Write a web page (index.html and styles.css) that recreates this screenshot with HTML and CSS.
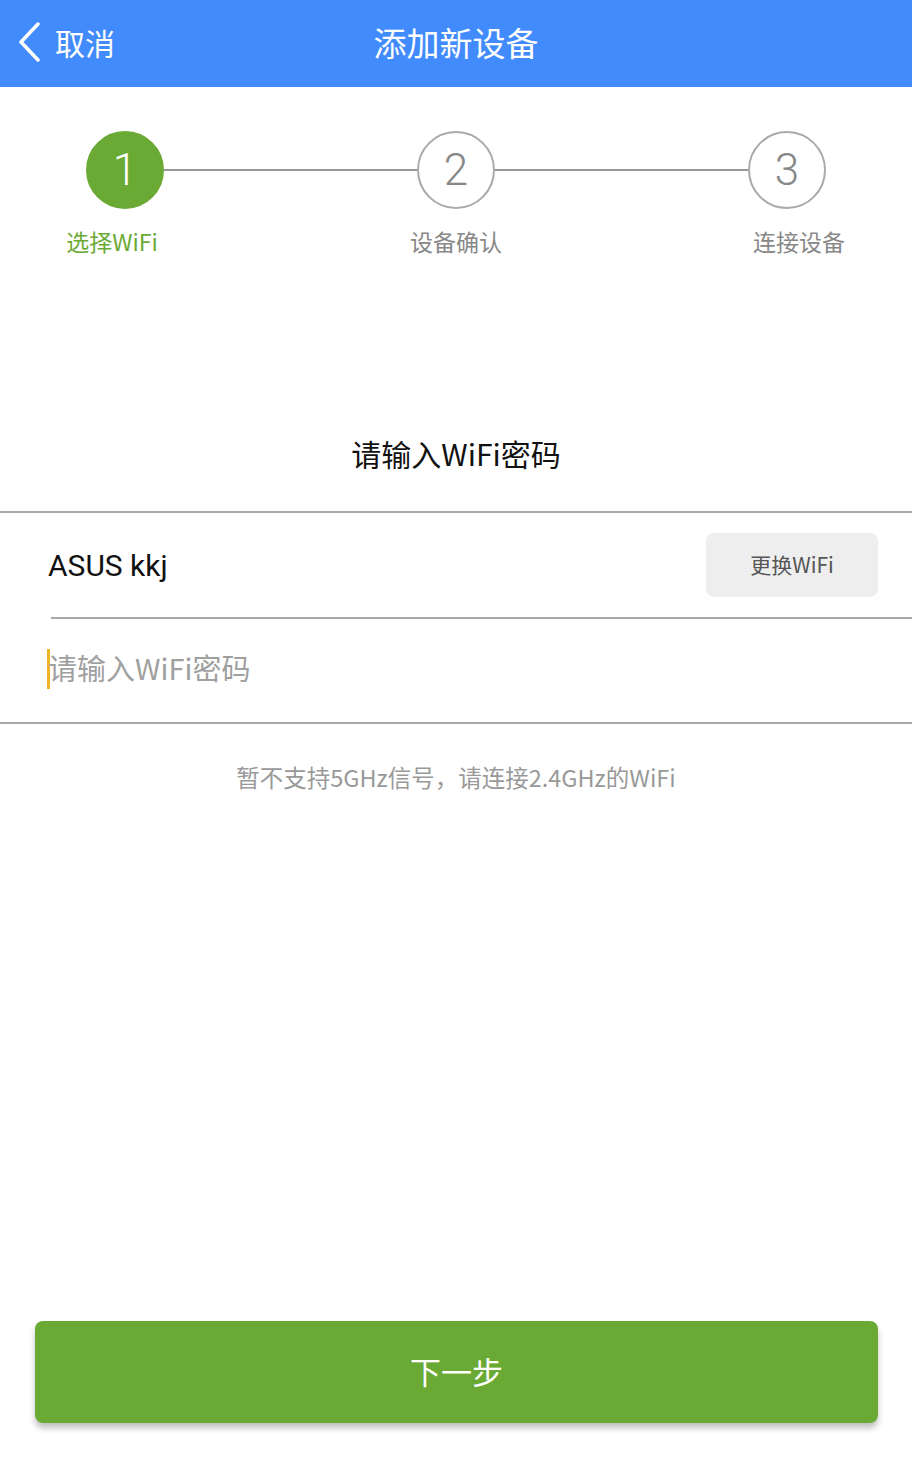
FILE: index.html
```html
<!DOCTYPE html>
<html lang="zh-CN">
<head>
  <meta charset="UTF-8" />
  <meta name="viewport" content="width=device-width, initial-scale=1.0"/>
  <title>添加新设备</title>
  <link rel="stylesheet" href="styles.css">
</head>
<body>

  <!-- Top bar -->
  <header class="topbar">
    <a class="back" href="#">
      <svg class="back-icon" width="24" height="40" viewBox="0 0 24 40">
        <path d="M21 2 L4 20 L21 38" fill="none" stroke="#fff" stroke-width="3.5" stroke-linecap="round" stroke-linejoin="round"/>
      </svg>
      <span>取消</span>
    </a>
    <div class="title">添加新设备</div>
  </header>

  <!-- Steps -->
  <div class="steps">
    <div class="step active">
      <div class="circle">1</div>
      <div class="step-label">选择WiFi</div>
    </div>
    <div class="line"></div>
    <div class="step">
      <div class="circle">2</div>
      <div class="step-label">设备确认</div>
    </div>
    <div class="line"></div>
    <div class="step">
      <div class="circle">3</div>
      <div class="step-label">连接设备</div>
    </div>
  </div>

  <h2 class="form-title">请输入WiFi密码</h2>

  <div class="form">
    <div class="ssid-row">
      <span class="ssid">ASUS kkj</span>
      <button class="change-btn" type="button">更换WiFi</button>
    </div>
    <div class="pwd-row">
      <span class="caret"></span>
      <input class="pwd" type="password" placeholder="请输入WiFi密码">
    </div>
  </div>

  <p class="hint">暂不支持5GHz信号，请连接2.4GHz的WiFi</p>

  <div class="footer">
    <button class="next-btn" type="button">下一步</button>
  </div>

</body>
</html>
```

FILE: styles.css
```css
body {
  margin: 0;
  padding: 0;
  font-family: "Noto Sans CJK SC", "Noto Sans", sans-serif;
  background-color: #fff;
  color: #111;
  height: 1461px;
  display: flex;
  flex-direction: column;
}

.topbar {
  height: 87px;
  background-color: #428bfd;
  display: flex;
  align-items: center;
  justify-content: center;
  position: relative;
  color: #fff;
}

.back {
  position: absolute;
  left: 17px;
  top: 22px;
  display: flex;
  align-items: center;
  color: #fff;
  text-decoration: none;
  font-size: 30px;
}

.back span {
  margin-left: 14px;
  line-height: 40px;
}

.title {
  font-size: 33px;
  margin-top: -4px;
}

.steps {
  display: flex;
  align-items: flex-start;
  padding: 44px 86px 0 86px;
  height: 180px;
}

.step {
  width: 78px;
  display: flex;
  flex-direction: column;
  align-items: center;
}

.circle {
  width: 74px;
  height: 74px;
  border: 2px solid #aaa;
  border-radius: 50%;
  display: flex;
  align-items: center;
  justify-content: center;
  font-family: "Roboto", sans-serif;
  font-size: 44px;
  font-weight: 300;
  color: #888;
}

.step.active .circle {
  background-color: #6aaa34;
  border-color: #6aaa34;
  color: #fff;
}

.step-label {
  margin-top: 15px;
  font-size: 23px;
  color: #888;
  white-space: nowrap;
}

.step.active .step-label {
  color: #6aaa34;
  margin-right: 26px;
}

.step:last-child .step-label {
  margin-left: 24px;
}

.line {
  flex: 1;
  height: 2px;
  background-color: #999;
  margin-top: 38px;
}

.form-title {
  margin: 120px 0 0;
  text-align: center;
  font-size: 30px;
  font-weight: normal;
  color: #111;
  line-height: 44px;
}

.form {
  margin-top: 36px;
  border-top: 2px solid #a8a8a8;
  border-bottom: 2px solid #a8a8a8;
}

.ssid-row {
  display: flex;
  align-items: center;
  justify-content: space-between;
  height: 104px;
  margin-left: 51px;
  padding-right: 34px;
  border-bottom: 2px solid #a8a8a8;
}

.ssid {
  font-family: "Roboto", sans-serif;
  font-size: 30px;
  margin-left: -3px;
  color: #111;
}

.change-btn {
  width: 172px;
  height: 64px;
  border: none;
  border-radius: 8px;
  background-color: #eeeeee;
  color: #555;
  font-family: "Noto Sans CJK SC", sans-serif;
  font-size: 21px;
  padding-bottom: 4px;
}

.pwd-row {
  display: flex;
  align-items: center;
  height: 103px;
  padding-left: 47px;
}

.caret {
  width: 3px;
  height: 40px;
  margin-top: -4px;
  margin-right: -2px;
  background-color: #f0b429;
}

.pwd {
  flex: 1;
  border: none;
  outline: none;
  padding: 0 0 8px;
  font-family: "Noto Sans CJK SC", sans-serif;
  font-size: 29px;
  color: #333;
  background: transparent;
}

.pwd::placeholder {
  color: #a0a0a0;
}

.hint {
  margin: 36px 0 0;
  text-align: center;
  font-size: 23.5px;
  color: #999;
}

.footer {
  margin-top: auto;
  padding: 0 34px 38px 35px;
}

.next-btn {
  width: 100%;
  height: 102px;
  border: none;
  border-radius: 8px;
  background-color: #6aaa34;
  color: #fff;
  font-family: "Noto Sans CJK SC", sans-serif;
  font-size: 31px;
  padding-bottom: 4px;
  box-shadow: 0 5px 6px rgba(0, 0, 0, 0.25);
}
```
